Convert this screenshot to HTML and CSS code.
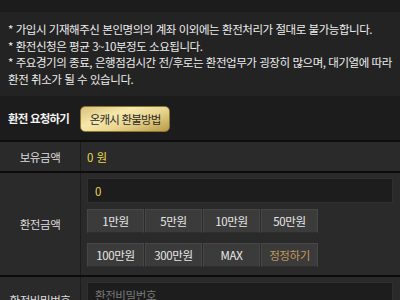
FILE: index.html
```html
<!DOCTYPE html>
<html lang="ko">
<head>
<meta charset="utf-8">
<link rel="stylesheet" href="styles.css">
</head>
<body>
<div class="topbar"></div>
<div class="notice">
  <p>* 가입시 기재해주신 본인명의의 계좌 이외에는 환전처리가 절대로 불가능합니다.</p>
  <p>* 환전신청은 평균 3~10분정도 소요됩니다.</p>
  <p>* 주요경기의 종료, 은행점검시간 전/후로는 환전업무가 굉장히 많으며, 대기열에 따라 환전 취소가 될 수 있습니다.</p>
</div>
<div class="header">
  <span class="title">환전 요청하기</span>
  <span class="gold">온캐시 환불방법</span>
</div>
<div class="table">
  <div class="row row-balance">
    <div class="label">보유금액</div>
    <div class="value"><span class="yellow">0 원</span></div>
  </div>
  <div class="row row-amount">
    <div class="label">환전금액</div>
    <div class="value col">
      <div class="input"><span class="yellow">0</span></div>
      <div class="btns">
        <span class="btn">1만원</span>
        <span class="btn">5만원</span>
        <span class="btn">10만원</span>
        <span class="btn">50만원</span>
      </div>
      <div class="btns">
        <span class="btn">100만원</span>
        <span class="btn">300만원</span>
        <span class="btn">MAX</span>
        <span class="btn btn-reset">정정하기</span>
      </div>
    </div>
  </div>
  <div class="row row-pass">
    <div class="label">환전비밀번호</div>
    <div class="value col">
      <div class="input pw"><span class="ph">환전비밀번호</span></div>
    </div>
  </div>
</div>
</body>
</html>
```
FILE: styles.css
```css
* { box-sizing: border-box; }
html, body { margin: 0; padding: 0; }
body {
  width: 400px;
  height: 300px;
  overflow: hidden;
  background: #2a2a2a;
  font-family: "Noto Sans CJK KR", "Noto Sans", sans-serif;
  font-size: 11.5px;
  color: #e6e6e6;
}
.topbar { height: 12px; background: #1c1c1c; }
.notice {
  height: 84px;
  background: #232323;
  padding: 9px 8px 0 8px;
  line-height: 16.5px;
  letter-spacing: -0.45px;
  color: #ececec;
}
.notice p { margin: 0; }
.header {
  height: 44px;
  background: #1c1c1c;
  display: flex;
  align-items: center;
  padding-left: 8px;
  gap: 11px;
}
.title { font-weight: bold; color: #f2f2f2; letter-spacing: -0.8px; }
.gold {
  display: inline-flex;
  align-items: center;
  justify-content: center;
  width: 90px;
  height: 26px;
  margin-top: 1px;
  border-radius: 5px;
  color: #2a2a2a;
  letter-spacing: -0.8px;
  background: linear-gradient(160deg, #d9c17a 0%, #f6e8ac 35%, #ead58f 60%, #b99a48 100%);
  border: 1px solid #8a7434;
}
.table { border-top: 2px solid #0c0c0c; }
.row {
  display: flex;
  border-bottom: 2px solid #0c0c0c;
}
.label {
  width: 81px;
  flex: none;
  border-right: 1px solid #1c1c1c;
  display: flex;
  align-items: center;
  justify-content: center;
  color: #dcdcdc;
  letter-spacing: -0.4px;
}
.value {
  flex: 1;
  display: flex;
  align-items: center;
  padding-left: 6px;
  padding-right: 7px;
}
.value.col { flex-direction: column; align-items: stretch; }
.row-balance { height: 31px; }
.yellow { color: #e8d94a; }
.row-amount { height: 104px; }
.row-amount .value { padding-top: 5px; }
.input {
  height: 25px;
  background: #1d1d1d;
  border: 1px solid #2f2f2f;
  display: flex;
  align-items: center;
  padding-left: 7px;
}
.btns {
  display: flex;
  gap: 1px;
  margin-top: 6px;
}
.btns + .btns { margin-top: 10px; }
.btn {
  width: 57px;
  height: 24px;
  display: flex;
  align-items: center;
  justify-content: center;
  background: #3b3b3b;
  border: 1px solid #474747;
  border-bottom-color: #2e2e2e;
  color: #e8e8e8;
  letter-spacing: -0.4px;
}
.btn-reset { color: #c29a5c; }
.row-pass { height: 60px; align-items: flex-start; }
.row-pass .label { height: 46px; }
.row-pass .value { padding-top: 5px; }
.pw { height: 26px; }
.ph { color: #777; letter-spacing: -0.4px; }
```
